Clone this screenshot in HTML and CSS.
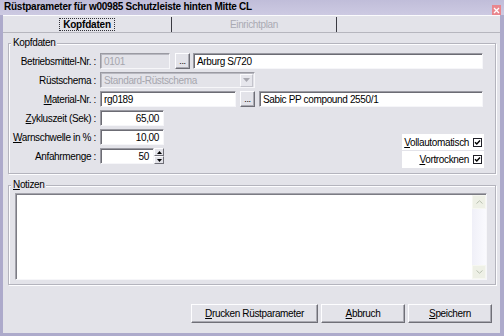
FILE: index.html
```html
<!DOCTYPE html>
<html lang="de">
<head>
<meta charset="utf-8">
<title>Rüstparameter</title>
<link rel="stylesheet" href="styles.css">
</head>
<body>
<div class="window">
  <div class="titlebar">
    <span class="title">Rüstparameter für w00985 Schutzleiste hinten Mitte CL</span>
    <span class="close"><svg width="9" height="10" viewBox="0 0 9 10"><path d="M2 3l5 5M7 3l-5 5" stroke="#fff" stroke-width="1.3"/></svg></span>
  </div>
  <div class="frame">
    <div class="tabs">
      <div class="tab active"><span class="focus">Kopfdaten</span></div>
      <div class="tab disabled">Einrichtplan</div>
    </div>
    <div class="panel">
      <fieldset class="group kopf">
        <legend>Kopfdaten</legend>
        <div class="kopf-body">
          <div class="row">
            <span class="lbl">Betriebsmittel-Nr. :</span>
            <span class="field disabled w70">0101</span>
            <span class="btn dots ml5">...</span>
            <span class="field grow ml3">Arburg S/720</span>
          </div>
          <div class="row">
            <span class="lbl">Rüstschema :</span>
            <span class="field disabled select w155"><span class="seltext">Standard-Rüstschema</span><span class="arrow"><svg width="7" height="4" viewBox="0 0 7 4"><path d="M0 0h7L3.5 4z" fill="#a8a8b0"/></svg></span></span>
          </div>
          <div class="row">
            <span class="lbl"><u>M</u>aterial-Nr. :</span>
            <span class="field w136">rg0189</span>
            <span class="btn dots ml4">...</span>
            <span class="field grow ml4">Sabic PP compound 2550/1</span>
          </div>
          <div class="lower">
            <div class="lower-rows">
              <div class="row">
                <span class="lbl"><u>Z</u>ykluszeit (Sek) :</span>
                <span class="field num w64">65,00</span>
              </div>
              <div class="row">
                <span class="lbl"><u>W</u>arnschwelle in % :</span>
                <span class="field num w64">10,00</span>
              </div>
              <div class="row">
                <span class="lbl">Anfahrmenge :</span>
                <span class="field num w54">50</span>
                <span class="spinner">
                  <span class="spin"><svg width="5" height="3" viewBox="0 0 5 3"><path d="M0 3h5L2.5 0z" fill="#000"/></svg></span>
                  <span class="spin"><svg width="5" height="3" viewBox="0 0 5 3"><path d="M0 0h5L2.5 3z" fill="#000"/></svg></span>
                </span>
              </div>
            </div>
            <div class="checks">
              <div class="check c1"><span><u>V</u>ollautomatisch</span><svg class="box" width="9" height="9" viewBox="0 0 9 9"><rect x="0.5" y="0.5" width="8" height="8" fill="#fff" stroke="#202028"/><path d="M2 4.2l1.8 1.8L7 2.6" fill="none" stroke="#000" stroke-width="1.5"/></svg></div>
              <div class="check c2"><span><u>V</u>ortrocknen</span><svg class="box" width="9" height="9" viewBox="0 0 9 9"><rect x="0.5" y="0.5" width="8" height="8" fill="#fff" stroke="#202028"/><path d="M2 4.2l1.8 1.8L7 2.6" fill="none" stroke="#000" stroke-width="1.5"/></svg></div>
            </div>
          </div>
        </div>
      </fieldset>
      <fieldset class="group notes">
        <legend><u>N</u>otizen</legend>
        <div class="memo">
          <div class="memo-text"></div>
          <div class="vscroll">
            <span class="sbtn"><svg width="7" height="4" viewBox="0 0 7 4"><path d="M0.5 3.5L3.5 0.8L6.5 3.5" fill="none" stroke="#b8c0b0" stroke-width="1"/></svg></span>
            <span class="track"></span>
            <span class="sbtn"><svg width="7" height="4" viewBox="0 0 7 4"><path d="M0.5 0.5L3.5 3.2L6.5 0.5" fill="none" stroke="#b8c0b0" stroke-width="1"/></svg></span>
          </div>
        </div>
      </fieldset>
      <div class="footer">
        <span class="btn push w127"><u>D</u>rucken Rüstparameter</span>
        <span class="btn push w84"><u>A</u>bbruch</span>
        <span class="btn push w84"><u>S</u>peichern</span>
      </div>
    </div>
  </div>
</div>
</body>
</html>
```
FILE: styles.css
```css
* { box-sizing: border-box; }
html, body { margin: 0; padding: 0; }
body {
  width: 504px;
  height: 336px;
  overflow: hidden;
  font-family: "Liberation Sans", Arial, sans-serif;
  font-size: 10px;
  letter-spacing: -0.35px;
  color: #000;
  background: #e3e3e9;
}
u { text-decoration: underline; text-underline-offset: 1px; }

.window {
  width: 504px;
  height: 336px;
  display: flex;
  flex-direction: column;
}

.titlebar {
  height: 15px;
  flex: none;
  display: flex;
  align-items: flex-start;
  justify-content: space-between;
  padding: 0 3px 0 4px;
  background: linear-gradient(#c0bdd9, #cdcae2);
}
.title {
  font-weight: bold;
  letter-spacing: -0.25px;
  line-height: 14px;
  white-space: nowrap;
}
.close {
  width: 9px;
  height: 10px;
  margin-top: 5px;
  background: #e9868d;
  display: flex;
}

.frame {
  flex: 1;
  display: flex;
  flex-direction: column;
  border-left: 3px solid #adaacb;
  border-right: 4px solid #adaacb;
  border-bottom: 3px solid #adaacb;
  background: #e3e3e9;
}

.tabs {
  height: 18px;
  flex: none;
  display: flex;
  border-top: 1px solid #fbfbfd;
  border-bottom: 1px solid #b6b6be;
}
.tab {
  margin-top: 1px;
  display: flex;
  align-items: center;
  justify-content: center;
  border-right: 1px solid #3a3a42;
  white-space: nowrap;
}
.tab.active { width: 169px; font-weight: bold; letter-spacing: -0.2px; }
.tab.disabled { width: 165px; color: #aaaab3; }
.focus {
  outline: 1px dotted #303038;
  padding: 0 3px;
  line-height: 11px;
}

.panel {
  flex: 1;
  display: flex;
  flex-direction: column;
  padding: 0 4px 0 5px;
}

.group {
  margin: 0;
  padding: 0;
  min-width: 0;
  border: 1px solid #b4b4bd;
  box-shadow: inset 1px 1px 0 #fdfdff, 1px 1px 0 #fdfdff;
}
.group legend {
  margin-left: 2px;
  padding: 0 2px;
  line-height: 12px;
  background: #e3e3e9;
}

.kopf { margin-top: 4px; }
.kopf-body {
  display: flex;
  flex-direction: column;
  gap: 3px;
  padding: 4px 12px 4px 0;
}

.row {
  display: flex;
  align-items: center;
  height: 16px;
}
.lbl {
  width: 87px;
  margin-right: 4px;
  text-align: right;
  white-space: nowrap;
}

.field {
  height: 16px;
  display: flex;
  align-items: center;
  padding: 0 3px;
  background: #fff;
  border: 1px solid;
  border-color: #9a9aa2 #f6f6f9 #f6f6f9 #9a9aa2;
  box-shadow: inset 1px 1px 0 #6c6c74;
  white-space: nowrap;
  overflow: hidden;
}
.field.disabled {
  background: #e3e3e9;
  color: #a6a6ae;
  box-shadow: inset 1px 1px 0 #b8b8c0;
}
.field.num { justify-content: flex-end; padding-right: 4px; }
.grow { flex: 1; }
.w70 { width: 70px; }
.w155 { width: 155px; }
.w136 { width: 136px; }
.w64 { width: 64px; }
.w54 { width: 54px; }
.ml3 { margin-left: 3px; }
.ml4 { margin-left: 4px; }
.ml5 { margin-left: 5px; }

.select { padding-right: 1px; }
.seltext { flex: 1; }
.arrow {
  width: 13px;
  height: 13px;
  display: flex;
  align-items: center;
  justify-content: center;
  background: #e6e6ec;
  border: 1px solid;
  border-color: #fbfbfd #c4c4cc #c4c4cc #fbfbfd;
}

.btn {
  display: flex;
  align-items: center;
  justify-content: center;
  background: #e3e3e9;
  border: 1px solid;
  border-color: #fdfdff #6f6f77 #6f6f77 #fdfdff;
  box-shadow: inset -1px -1px 0 #aaaab2;
  white-space: nowrap;
}
.dots {
  width: 15px;
  height: 16px;
  align-items: flex-end;
  padding-bottom: 3px;
  line-height: 8px;
  font-size: 9px;
}

.lower {
  display: flex;
  align-items: flex-end;
}
.lower-rows {
  display: flex;
  flex-direction: column;
  gap: 3px;
  margin-bottom: 5px;
}
.spinner {
  width: 10px;
  height: 16px;
  display: flex;
  flex-direction: column;
}
.spin {
  flex: 1;
  display: flex;
  align-items: center;
  justify-content: center;
  background: #e3e3e9;
  border: 1px solid;
  border-color: #fdfdff #6f6f77 #6f6f77 #fdfdff;
}

.checks {
  margin-left: auto;
  margin-right: -1px;
  margin-bottom: 1px;
  display: flex;
  flex-direction: column;
  gap: 1px;
}
.check {
  width: 82px;
  display: flex;
  align-items: center;
  justify-content: flex-end;
  gap: 4px;
  padding-right: 2px;
  background: #fff;
  white-space: nowrap;
}
.check.c1 { height: 16px; }
.check.c2 { height: 17px; }
.box { flex: none; }

.notes { margin-top: 5px; }
.memo {
  display: flex;
  height: 87px;
  margin: 2px 8px 4px 6px;
  border: 1px solid;
  border-color: #a4a4ac #f6f6f9 #f6f6f9 #a4a4ac;
  box-shadow: inset 1px 1px 0 #7c7c84;
  background: #fff;
  padding: 1px 0 0 1px;
}
.memo-text { flex: 1; }
.vscroll {
  width: 14px;
  display: flex;
  flex-direction: column;
  background: #f4f4fb;
}
.sbtn {
  height: 14px;
  display: flex;
  align-items: center;
  justify-content: center;
  background: #eef0e6;
  border: 1px solid #f6f7f1;
}
.track { flex: 1; background: linear-gradient(90deg, #f0f0f8, #fafafe); }

.footer {
  margin-top: 19px;
  margin-right: 4px;
  display: flex;
  justify-content: flex-end;
  gap: 3px;
}
.push { height: 19px; }
.w127 { width: 127px; }
.w84 { width: 84px; }
```
